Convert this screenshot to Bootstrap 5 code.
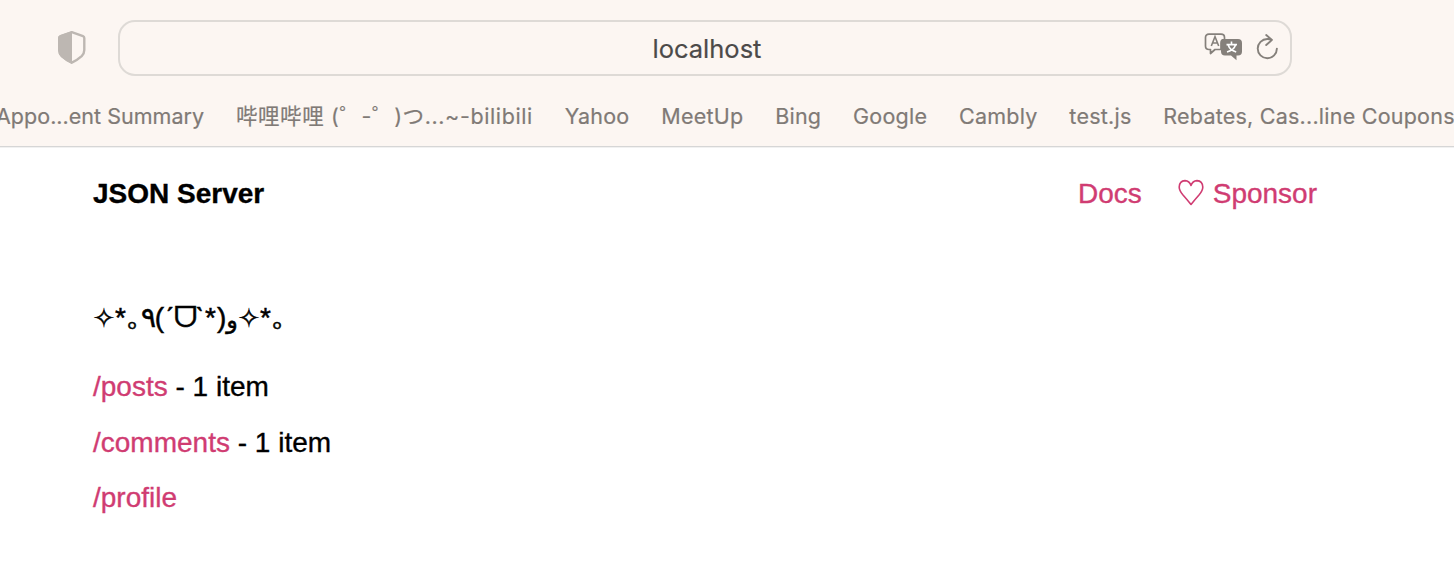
<!DOCTYPE html>
<html lang="en">
<head>
<meta charset="utf-8">
<meta name="viewport" content="width=device-width, initial-scale=1">
<title>JSON Server</title>
<link href="https://cdn.jsdelivr.net/npm/bootstrap@5.3.0/dist/css/bootstrap.min.css" rel="stylesheet">
<style>
body{font-family:"Liberation Sans",sans-serif;font-size:28px;line-height:32px;color:#000;background:#fff;overflow:hidden;-webkit-text-stroke:.35px currentColor}
.chrome{height:148px;background:#fcf6f2;border-bottom:1px solid #f1f1f1;box-shadow:inset 0 -1px #d6d6d6;font-family:Inter,"Noto Sans CJK SC",sans-serif;-webkit-text-stroke:.2px currentColor}
.toolbar{height:96px;padding-left:57px}
.shield{width:30px;height:34px;margin:0 31px 2px 0}
.address{width:1174px;height:56px;border:2px solid #dedad6;border-radius:17px;color:#4c4a49;font-size:25.5px;padding:0 11px 0 86px}
.host{padding-top:2px;padding-left:4px}
.tools{color:#85807b;width:75px}
.translate{margin-bottom:2px}
.bookmarks{height:40px;font-size:21.5px;color:#807a76;margin-left:-4px;gap:31.8px;line-height:40px}
.bookmarks span{flex:none;letter-spacing:.23px}
.bookmarks .tight{letter-spacing:.02px}
.bookmarks .loose{letter-spacing:.61px}
.page-top{padding:30px 137px 0 93px}
a{color:#d03c72;text-decoration:none}
.sponsor{padding-left:27px}
.page-body{padding:92px 93px 0}
.kaomoji{height:32px;direction:ltr;-webkit-text-stroke:.5px #000}
.kaomoji span{display:block;flex:none;text-align:center;white-space:nowrap;font-family:"Liberation Sans","DejaVu Sans",sans-serif}
.kaomoji .star{width:22px;font-size:26px}.ast{width:11px}.dot{width:15px}
.kaomoji .waw{width:12px;font-size:24px;padding-top:2px}
.routes{padding-top:37px;gap:23.5px}
</style>
</head>
<body>
<header class="chrome">
  <div class="toolbar d-flex align-items-center">
    <svg class="shield" viewBox="0 0 30 34"><path d="M14.8 2.2 26 6.1q1.3.5 1.3 2v12q0 3.5-2.6 6-4.2 3.8-9.9 6.5Q9.1 29.9 4.9 26.1 2.300 23.600 2.300 20.100v-12q0-1.500 1.300-2Z" fill="none" stroke="#bdb7b2" stroke-width="2.400"/><path d="M15 1 3 5.200Q1 6 1 8v12q0 4 3 7 4 3.800 11 7Z" fill="#bdb7b2"/></svg>
    <div class="address d-flex align-items-center justify-content-between">
      <div class="host flex-grow-1 text-center">localhost</div>
      <div class="tools d-flex align-items-center justify-content-between">
        <svg class="translate" width="38" height="30" viewBox="0 0 38 30"><path d="M5 2.200h12q3.500 0 3.500 3.300v2H20q-3 0-3 3.500v6.500H11l-4.500 4v-4H5q-3.500 0-3.500-3.500V5.500Q1.500 2.200 5 2.200Z" fill="none" stroke="currentColor" stroke-width="1.700" stroke-linejoin="round"/><path d="M7.300 14 11 4.600 14.700 14M8.600 11h4.900" fill="none" stroke="currentColor" stroke-width="1.600"/><path d="M21 7h13q4 0 4 4v8.500q0 4-4 4h-1.500v4.800L27 23.500h-6q-4 0-4-4V11q0-4 4-4Z" fill="currentColor"/><path d="M27.500 9.500v3M22.500 12.600h10.500M24.200 13q1.500 5 8 7M31.500 13q-1.500 5-8.500 7" fill="none" stroke="#fff" stroke-width="1.600"/></svg>
        <svg width="23" height="28" viewBox="0 0 23 28"><path d="M15.800 5.800Q13.500 5 11.300 5A9.600 9.600 0 1 0 20.900 14.600M10.200 1.100 16 5.900l-5.800 5.100" fill="none" stroke="currentColor" stroke-width="1.900" stroke-linecap="round" stroke-linejoin="round"/></svg>
      </div>
    </div>
  </div>
  <nav class="bookmarks d-flex text-nowrap">
    <span class="tight">Appo...ent Summary</span><span class="loose">哔哩哔哩 (゜-゜)つ...~-bilibili</span><span>Yahoo</span><span>MeetUp</span><span>Bing</span><span>Google</span><span>Cambly</span><span>test.js</span><span>Rebates, Cas...line Coupons</span>
  </nav>
</header>
<div class="page-top d-flex justify-content-between">
  <strong>JSON Server</strong>
  <nav class="d-flex">
    <a href="#">Docs</a>
    <a href="#" class="sponsor d-flex"><svg class="mx-2" width="28" height="30" viewBox="0 0 28 30"><path d="M14 26.500Q10 21.500 6 17 2.200 12.500 2.200 9 2.500 3 8 2.600 12.500 2.800 14 7.500 15.500 2.800 20 2.600 25.500 3 25.800 9 25.800 12.500 22 17 18 21.500 14 26.500Z" fill="none" stroke="currentColor" stroke-width="1.600" stroke-linejoin="round"/></svg>Sponsor</a>
  </nav>
</div>
<main class="page-body">
  <div class="kaomoji d-flex">
    <span class="star">✧</span><span class="ast">*</span><span class="dot">｡</span><span style="width:13px">٩</span><span style="width:11px">(</span><span style="width:9px">ˊ</span><span style="width:21px">ᗜ</span><span style="width:9px">ˋ</span><span style="width:13px">*</span><span style="width:9px">)</span><span class="waw">و</span><span class="star">✧</span><span class="ast">*</span><span class="dot">｡</span>
  </div>
  <ul class="routes list-unstyled m-0 d-flex flex-column">
    <li><a href="#">/posts</a> - 1 item</li>
    <li><a href="#">/comments</a> - 1 item</li>
    <li><a href="#">/profile</a></li>
  </ul>
</main>
<script src="https://cdn.jsdelivr.net/npm/bootstrap@5.3.0/dist/js/bootstrap.bundle.min.js"></script>
</body>
</html>
